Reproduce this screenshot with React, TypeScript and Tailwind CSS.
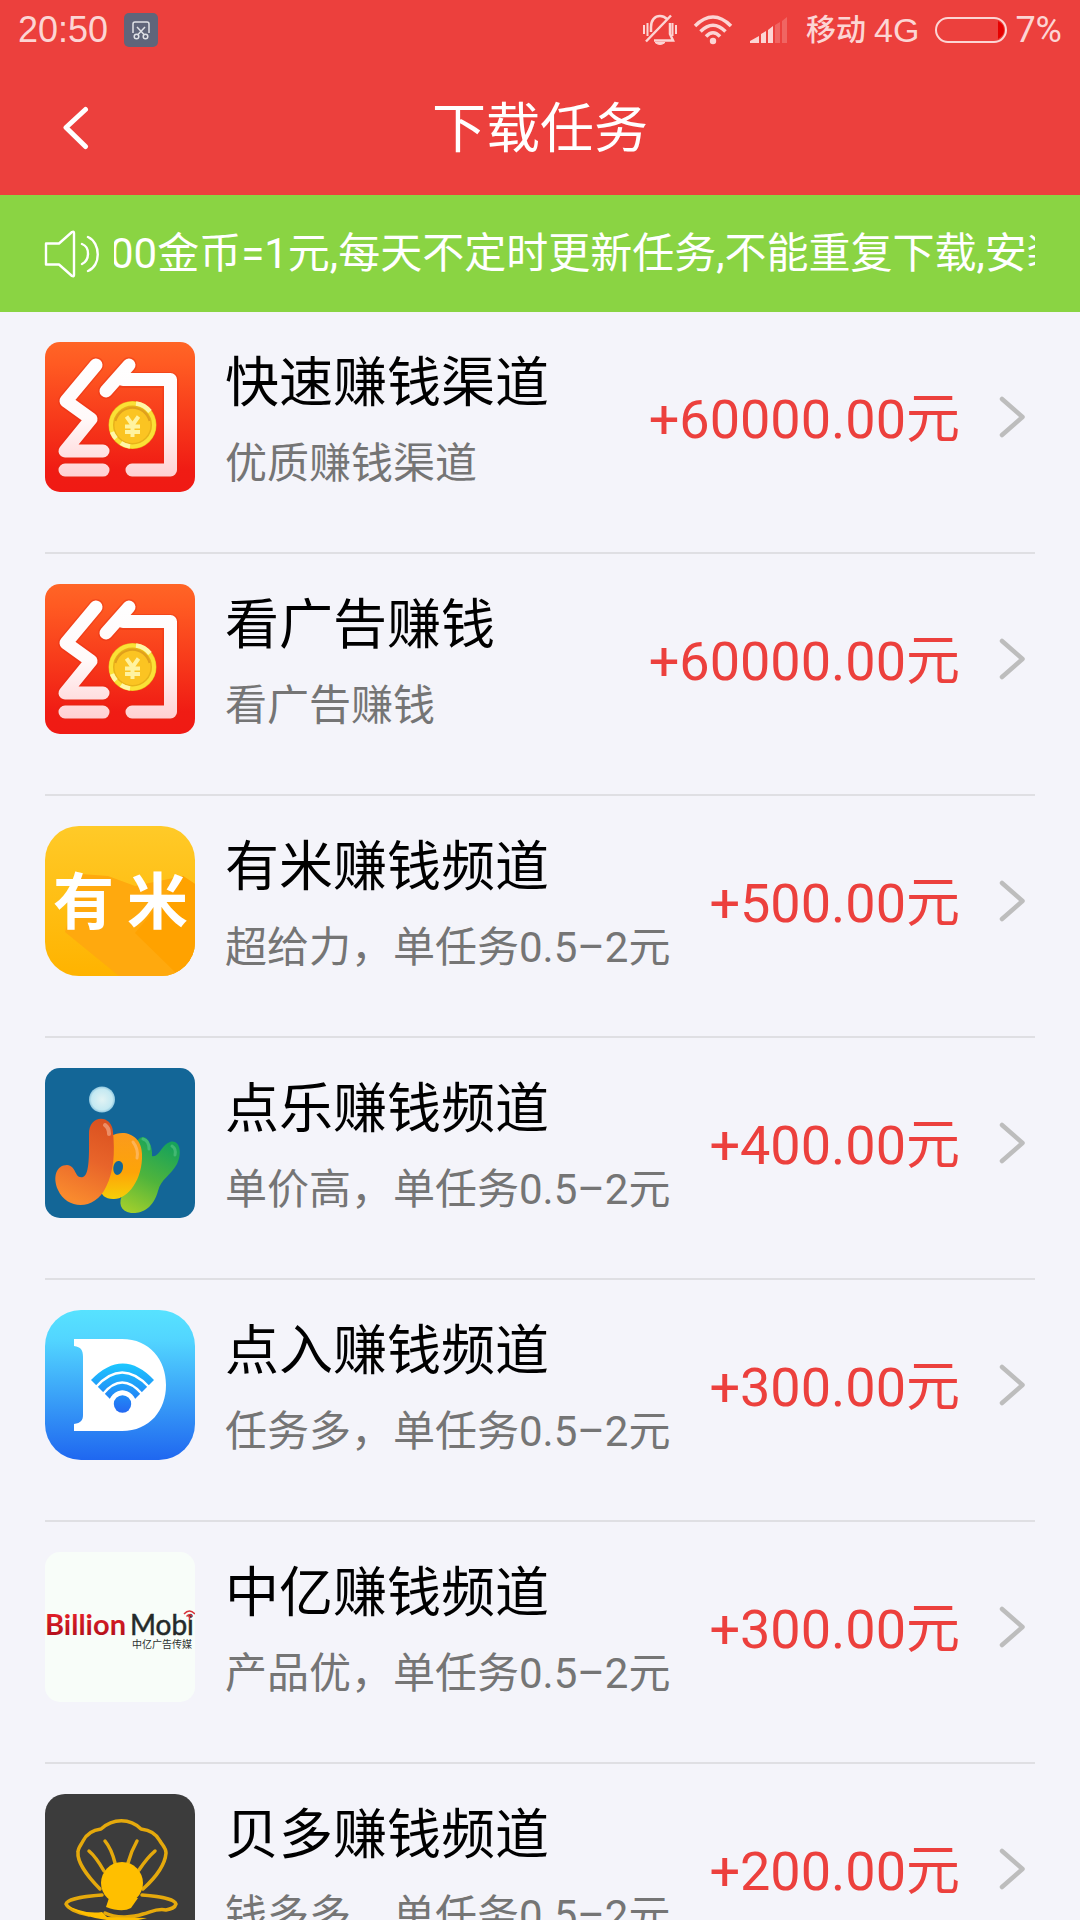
import React from "react";

function LogoYue({ id }: { id: string }) {
  return (
    <svg viewBox="0 0 150 150" className="size-full" aria-hidden="true">
      <defs>
        <linearGradient id={id + "bg"} x1="0" y1="0" x2="0" y2="1">
          <stop offset="0" stopColor="#ff6526" />
          <stop offset="0.15" stopColor="#ff5a22" />
          <stop offset="0.85" stopColor="#f01c14" />
          <stop offset="1" stopColor="#f01a14" />
        </linearGradient>
        <linearGradient id={id + "st"} gradientUnits="userSpaceOnUse" x1="0" y1="16" x2="0" y2="135">
          <stop offset="0" stopColor="#ffffff" />
          <stop offset="0.5" stopColor="#fffafa" />
          <stop offset="1" stopColor="#ffd0d2" />
        </linearGradient>
      </defs>
      <rect width="150" height="150" rx="15" fill={"url(#" + id + "bg)"} />
      <g fill="none" stroke="#e02a12" strokeOpacity="0.35" strokeWidth="16" strokeLinecap="round" strokeLinejoin="round">
        <path d="M51 23 21 59 46 77 20 109H58M20 128H58" />
        <path d="M84 23 61 49M78 38H125.500V128H87" />
      </g>
      <g fill="none" stroke={"url(#" + id + "st)"} strokeWidth="13" strokeLinecap="round" strokeLinejoin="round">
        <path d="M51 23 21 59 46 77 20 109H58" />
        <path d="M20 128H57.900L58 128.100" />
        <path d="M84 23 61 49M78 37.500H125.500V128H87" />
      </g>
      <circle cx="87.500" cy="83" r="24" fill="#e8b21a" />
      <circle cx="87.500" cy="83" r="21.500" fill="none" stroke="#fbe136" strokeWidth="4" />
      <path d="M91 61.500a21.500 21.500 0 0 1 14 8M67 90a21.500 21.500 0 0 0 4 6.500M76 101a21.500 21.500 0 0 0 9 3.500" fill="none" stroke="#fff7a8" strokeWidth="4.500" />
      <circle cx="87.500" cy="83" r="18" fill="#fbc422" />
      <path d="M70.500 79a17.500 17.500 0 0 1 34 0" fill="none" stroke="#e0a01c" strokeWidth="2" />
      <path d="M81.500 74.500 87.500 83 93.500 74.500M87.500 82V95M80 84.500H95M80 90H95" fill="none" stroke="#fff3a0" strokeWidth="4" />
    </svg>
  );
}

function LogoYoumi() {
  return (
    <svg viewBox="0 0 150 150" className="size-full" aria-hidden="true">
      <defs>
        <linearGradient id="ymbg" x1="0" y1="0" x2="0" y2="1">
          <stop offset="0" stopColor="#ffca28" />
          <stop offset="1" stopColor="#ffb300" />
        </linearGradient>
        <clipPath id="ymclip">
          <rect width="150" height="150" rx="34" />
        </clipPath>
      </defs>
      <g clipPath="url(#ymclip)">
        <rect width="150" height="150" fill="url(#ymbg)" />
        <path d="M36 48 63 50 90 60 138 50 150 58V150H74L20 106Z" fill="#ffa90e" />
        <path d="M138 50 150 58V150H134L90 107Z" fill="#ffa200" />
      </g>
      <text x="8" y="98" fontSize="61" fontWeight="700" fill="#ffffff" fontFamily='"Noto Sans CJK SC", sans-serif'>有</text>
      <text x="82" y="98" fontSize="61" fontWeight="700" fill="#ffffff" fontFamily='"Noto Sans CJK SC", sans-serif'>米</text>
    </svg>
  );
}

function LogoJoy() {
  return (
    <svg viewBox="0 0 150 150" className="size-full" aria-hidden="true">
      <defs>
        <linearGradient id="jj" gradientUnits="userSpaceOnUse" x1="60" y1="50" x2="25" y2="130">
          <stop offset="0" stopColor="#d9501f" />
          <stop offset="0.500" stopColor="#e8642a" />
          <stop offset="1" stopColor="#f98a2e" />
        </linearGradient>
        <linearGradient id="jo" x1="0" y1="0" x2="0" y2="1">
          <stop offset="0" stopColor="#fb9a1c" />
          <stop offset="0.600" stopColor="#fda408" />
          <stop offset="1" stopColor="#f6cf08" />
        </linearGradient>
        <linearGradient id="jy" gradientUnits="userSpaceOnUse" x1="120" y1="75" x2="85" y2="145">
          <stop offset="0" stopColor="#18a35a" />
          <stop offset="0.500" stopColor="#4fb43c" />
          <stop offset="1" stopColor="#a2cf2c" />
        </linearGradient>
        <radialGradient id="jd">
          <stop offset="0" stopColor="#e2f3f4" />
          <stop offset="0.800" stopColor="#c4e9f2" />
          <stop offset="1" stopColor="#8fc6de" />
        </radialGradient>
      </defs>
      <rect width="150" height="150" rx="15" fill="#136697" />
      <path d="M92 73C100 62 108 76 107 88 114 90 117 76 125 74 134 71 138 84 132 96 126 107 116 111 113 123 108 141 96 146 86 145 75 143 73 135 78 125Z" fill="url(#jy)" />
      <path d="M98 71C102 72 104 76 104 81" fill="none" stroke="#58c88b" strokeOpacity="0.600" strokeWidth="3" strokeLinecap="round" />
      <path d="M127 78C130 80 131 83 130 87" fill="none" stroke="#5bc486" strokeOpacity="0.600" strokeWidth="3" strokeLinecap="round" />
      <path fillRule="evenodd" d="M66 68C80 60 97 68 97 86 98 112 82 132 68 131 60 131 56 127 55 120ZM74 93C68 92 66 105 72 107 78 107 81 94 74 93Z" fill="url(#jo)" />
      <path d="M88 74C92 79 93 85 92 90" fill="none" stroke="#fdbd72" strokeOpacity="0.700" strokeWidth="3" strokeLinecap="round" />
      <path d="M44 67C43 46 67 46 68 64 70 85 69 103 61 119 50 143 22 142 13 122 7 108 12 97 22 97 32 98 29 111 38 109 45 107 44 82 44 67Z" fill="url(#jj)" />
      <path d="M60 57C63 59 64 62 64 66" fill="none" stroke="#f09c78" strokeOpacity="0.800" strokeWidth="4" strokeLinecap="round" />
      <circle cx="57" cy="31.500" r="13" fill="url(#jd)" />
    </svg>
  );
}

function LogoDianru() {
  return (
    <svg viewBox="0 0 150 150" className="size-full" aria-hidden="true">
      <defs>
        <linearGradient id="drbg" x1="0" y1="0" x2="0" y2="1">
          <stop offset="0" stopColor="#57e2ff" />
          <stop offset="0.200" stopColor="#52d5ff" />
          <stop offset="1" stopColor="#1f67f0" />
        </linearGradient>
        <linearGradient id="drw" gradientUnits="userSpaceOnUse" x1="0" y1="53" x2="0" y2="103">
          <stop offset="0" stopColor="#1cc9ff" />
          <stop offset="1" stopColor="#2468f2" />
        </linearGradient>
      </defs>
      <rect width="150" height="150" rx="36" fill="url(#drbg)" />
      <path d="M29 29H77C105 29 121 50 121 75S105 121 77 121H29V114C36 113 38 110 38 105V47C38 40 36 37 29 36Z" fill="#ffffff" />
      <path d="M46 70Q78 37 109 70L90 89Q77 72 65 89Z" fill="url(#drw)" />
      <g fill="none" stroke="#ffffff" strokeWidth="2.500">
        <path d="M51 77Q77 48 104 77" />
        <path d="M58 84Q77 61 97 84" />
      </g>
      <circle cx="77.500" cy="94" r="13.500" fill="#ffffff" />
      <circle cx="77.500" cy="94" r="8.700" fill="url(#drw)" />
    </svg>
  );
}

function LogoBillion() {
  return (
    <svg viewBox="0 0 150 150" className="size-full" aria-hidden="true">
      <defs>
        <linearGradient id="bmr" x1="0" y1="0" x2="0" y2="1">
          <stop offset="0.200" stopColor="#e3202a" />
          <stop offset="1" stopColor="#a80c18" />
        </linearGradient>
      </defs>
      <rect width="150" height="150" rx="15" fill="#f8fdf9" />
      <text x="0" y="83" fontSize="29" fontWeight="700" fill="url(#bmr)" fontFamily="Lato, sans-serif">Billion</text>
      <text x="85" y="83" fontSize="28" fill="#242a2a" stroke="#242a2a" strokeWidth="0.500" fontFamily="Lato, sans-serif">Mobi</text>
      <text x="87" y="96" fontSize="10" fill="#2c3030" fontFamily='"Noto Sans CJK SC", sans-serif'>中亿广告传媒</text>
      <path d="M139 62Q144.500 56 150 62M141.500 64.500Q144.500 61 147.500 64.500M144.500 64V68" fill="none" stroke="#d8323a" strokeWidth="1.500" />
    </svg>
  );
}

function LogoShell() {
  return (
    <svg viewBox="0 0 150 150" className="size-full" aria-hidden="true">
      <rect width="150" height="150" rx="20" fill="#3c3c3c" />
      <g fill="none" stroke="#e5a90c" strokeWidth="3.500" strokeLinecap="round" strokeLinejoin="round">
        <path d="M55 95C43 83 32 68 33 58 33 54 36 51 38 47 42 39 48 36 56 35 68 24 85 24 96 35 105 36 111 39 115 47 118 52 121 54 121 59 120 72 109 85 98 95" />
        <path d="M44 57C50 62 55 70 59 77M60 47C65 53 68 61 70 69M92 47C88 54 85 61 83 69M110 57C103 63 98 70 94 76" />
        <path d="M57 101C41 102 22 105 21 110 24 116 34 119 44 121M97 101C113 102 130 105 131 110 130 114 126 115 121 116 112 114 106 118 98 120 87 124 70 124 60 119" />
      </g>
      <path d="M21 110C29 116 44 120 57 118L62 123 102 124C84 130 40 128 21 110Z" fill="#ffbf00" />
      <circle cx="77" cy="89" r="21" fill="#ffbf00" />
      <path d="M64 104H93L86 114Q77 119 61 113Z" fill="#ffbf00" />
    </svg>
  );
}

const tasks = [
  { title: "快速赚钱渠道", note: "优质赚钱渠道", amount: "+60000.00元", logo: <LogoYue id="ya" /> },
  { title: "看广告赚钱", note: "看广告赚钱", amount: "+60000.00元", logo: <LogoYue id="yb" /> },
  { title: "有米赚钱频道", note: "超给力，单任务0.5–2元", amount: "+500.00元", logo: <LogoYoumi /> },
  { title: "点乐赚钱频道", note: "单价高，单任务0.5–2元", amount: "+400.00元", logo: <LogoJoy /> },
  { title: "点入赚钱频道", note: "任务多，单任务0.5–2元", amount: "+300.00元", logo: <LogoDianru /> },
  { title: "中亿赚钱频道", note: "产品优，单任务0.5–2元", amount: "+300.00元", logo: <LogoBillion /> },
  { title: "贝多赚钱频道", note: "钱多多，单任务0.5–2元", amount: "+200.00元", logo: <LogoShell /> },
];

function StatusBar() {
  return (
    <div className="flex h-[60px] items-center justify-between pr-[18px] pl-[18px] text-[#fcd5d4]">
      <div className="flex items-center gap-4">
        <span className="font-['Liberation_Sans',sans-serif] text-[36px] leading-[60px]">20:50</span>
        <svg viewBox="0 0 34 34" className="size-[34px]" aria-hidden="true">
          <rect width="34" height="34" rx="5" fill="#60657a" />
          <g fill="none" stroke="#dfe1e6" strokeWidth="1.500">
            <path d="M9 20V11Q9 9 11 9H23Q25 9 25 11V20M13 14 20 21.500M21 14 14 21.500" />
            <circle cx="12.500" cy="23.500" r="2.300" />
            <circle cx="21.500" cy="23.500" r="2.300" />
          </g>
        </svg>
      </div>
      <div className="flex items-center">
        <svg viewBox="0 0 34 32" className="h-8 w-[34px]" fill="none" stroke="currentColor" strokeWidth="2.500" aria-hidden="true">
          <path d="M8 18V13C8 6 12 2 17 2 19.500 2 22 3 24 5M27 9V20L30 26.500H11M28 1.500 3 27.500" />
          <path d="M1 11V20M4.500 9V22M29.500 9V22M33 11V20" strokeWidth="2" />
          <path d="M12 28.500H22Q17 32.500 12 28.500Z" fill="currentColor" strokeWidth="1" />
        </svg>
        <svg viewBox="0 0 40 30" className="ml-4 h-[30px] w-10" fill="none" stroke="currentColor" strokeWidth="3.500" aria-hidden="true">
          <path d="M2 11Q20 -7 38 11M7.500 16.500Q20 4 32.500 16.500M13 21.500Q20 14 27 21.500" />
          <circle cx="20" cy="26" r="3.200" fill="currentColor" stroke="none" />
        </svg>
        <svg viewBox="0 0 38 26" className="ml-[17px] h-[26px] w-[38px]" fill="currentColor" aria-hidden="true">
          <path d="M0 26V24L9 19V26ZM11 26V17L16 14V26ZM18 26V13L23 9V26Z" />
          <path d="M25 26V8L30 5V26ZM32 26V4L37 0V26Z" opacity="0.250" />
        </svg>
        <span className="ml-[18px] text-[30px] leading-[60px] font-medium">移动</span>
        <span className="ml-2 font-['Liberation_Sans',sans-serif] text-[34px] leading-[60px]">4G</span>
        <svg viewBox="0 0 72 26" className="ml-4 h-[26px] w-[72px]" aria-hidden="true">
          <path d="M63 4V22Q69 19 69 13T63 4Z" fill="#e60000" />
          <rect x="1" y="1" width="70" height="24" rx="12" fill="none" stroke="currentColor" strokeWidth="2" />
        </svg>
        <span className="ml-2 text-[36px] leading-[60px]">7%</span>
      </div>
    </div>
  );
}

export default function App() {
  return (
    <div className="flex h-screen flex-col bg-[#f4f4fa] font-['Roboto','Noto_Sans_CJK_SC',sans-serif]" lang="zh-CN">
      <header className="h-[195px] shrink-0 bg-[#ec403d] text-white">
        <StatusBar />
        <div className="grid grid-cols-[150px_1fr_150px] items-center">
          <button type="button" aria-label="返回" className="flex h-[135px] items-center pl-[62px]">
            <svg viewBox="0 0 28 44" className="h-11 w-7" fill="none" stroke="currentColor" strokeWidth="5" strokeLinecap="round" strokeLinejoin="round" aria-hidden="true">
              <path d="M23.500 3.500 4 21.500 23.500 40.500" />
            </svg>
          </button>
          <h1 className="pt-1 text-center text-[54px] leading-[131px]">下载任务</h1>
        </div>
      </header>

      <div className="flex h-[117px] shrink-0 items-center bg-[#8ad443] pr-[45px] pl-11 text-white">
        <svg viewBox="0 0 56 48" className="h-12 w-14 shrink-0" fill="none" stroke="currentColor" strokeWidth="2.400" strokeLinecap="round" strokeLinejoin="round" aria-hidden="true">
          <path d="M2 13.500H15L28 2Q30 1 30 3V45Q30 47 28 46L15 34.500H2Z" />
          <path d="M38 14C46 17 46 30 38 34M44 7C57 13 57 36 44 41" />
        </svg>
        <div className="ml-[14px] min-w-0 flex-1 overflow-hidden">
          <p className="-ml-1 text-[42px] leading-[60px] whitespace-nowrap">00金币=1元,每天不定时更新任务,不能重复下载,安装</p>
        </div>
      </div>

      <main className="min-h-0 flex-1 overflow-y-auto [scrollbar-width:none]">
        <ul className="px-[45px]">
          {tasks.map((t) => (
            <li key={t.title} className="border-b-2 border-[#dfdfe3]">
              <a href="#task" className="flex items-start pt-[30px] pb-[50px]">
                <div className="size-[150px] shrink-0">{t.logo}</div>
                <div className="ml-[30px] min-w-0 flex-1">
                  <h2 className="text-[54px] leading-[84px] whitespace-nowrap text-black">{t.title}</h2>
                  <p className="text-[42px] leading-[76px] whitespace-nowrap text-[#757575]">{t.note}</p>
                </div>
                <div className="flex h-[150px] items-center">
                  <span className="pt-1 text-[54px] whitespace-nowrap text-[#ec403d]">{t.amount}</span>
                  <svg viewBox="0 0 28 44" className="mr-[9px] ml-[38px] h-11 w-7" fill="none" stroke="#bdbdbd" strokeWidth="4.500" strokeLinecap="round" strokeLinejoin="round" aria-hidden="true">
                    <path d="M4 4 24.500 22 4 40" />
                  </svg>
                </div>
              </a>
            </li>
          ))}
        </ul>
      </main>
    </div>
  );
}
